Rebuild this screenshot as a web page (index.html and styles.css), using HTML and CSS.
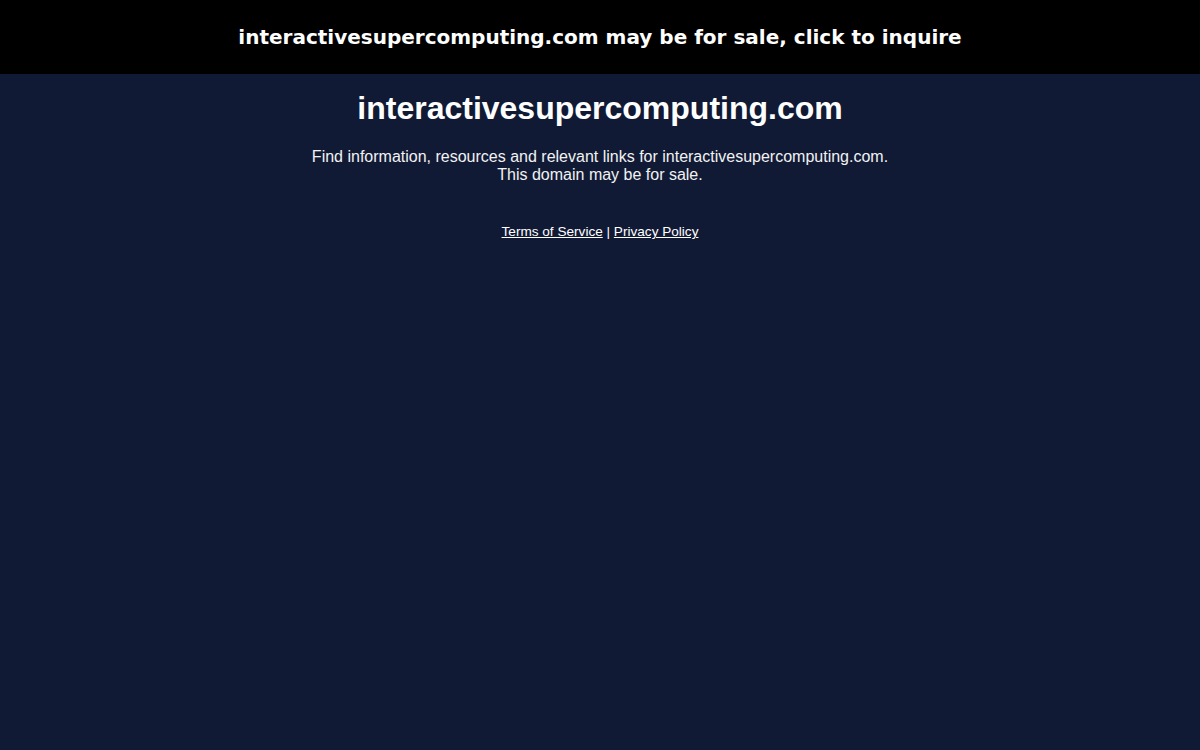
FILE: index.html
```html
<!DOCTYPE html>
<html>
<head>
<meta charset="utf-8">
<link rel="stylesheet" href="styles.css">
<title>interactivesupercomputing.com</title>
</head>
<body>
<div class="bar"><a class="bar-link" href="#">interactivesupercomputing.com may be for sale, click to inquire</a></div>
<main class="content">
<h1 class="title">interactivesupercomputing.com</h1>
<p class="desc">Find information, resources and relevant links for interactivesupercomputing.com.<br>This domain may be for sale.</p>
<div class="footer"><a href="#">Terms of Service</a> | <a href="#">Privacy Policy</a></div>
</main>
</body>
</html>
```

FILE: styles.css
```css
html, body {
  margin: 0;
  padding: 0;
  background: #111a35;
  height: 100%;
}
body {
  font-family: "Liberation Sans", Arial, sans-serif;
  color: #ffffff;
}
.bar {
  background: #000000;
  height: 74px;
  display: flex;
  align-items: center;
  justify-content: center;
}
.bar-link {
  font-family: "DejaVu Sans", sans-serif;
  font-weight: bold;
  font-size: 20px;
  color: #ffffff;
  text-decoration: none;
}
.content {
  text-align: center;
}
.title {
  font-size: 32px;
  font-weight: bold;
  line-height: 37px;
  margin: 16px 0 0;
}
.desc {
  font-size: 16px;
  line-height: 18px;
  margin: 21px 0 0;
  color: #f2f2f2;
}
.footer {
  font-size: 13.6px;
  line-height: 15px;
  margin-top: 40px;
}
.footer a {
  color: #ffffff;
  text-decoration: underline;
}
```
